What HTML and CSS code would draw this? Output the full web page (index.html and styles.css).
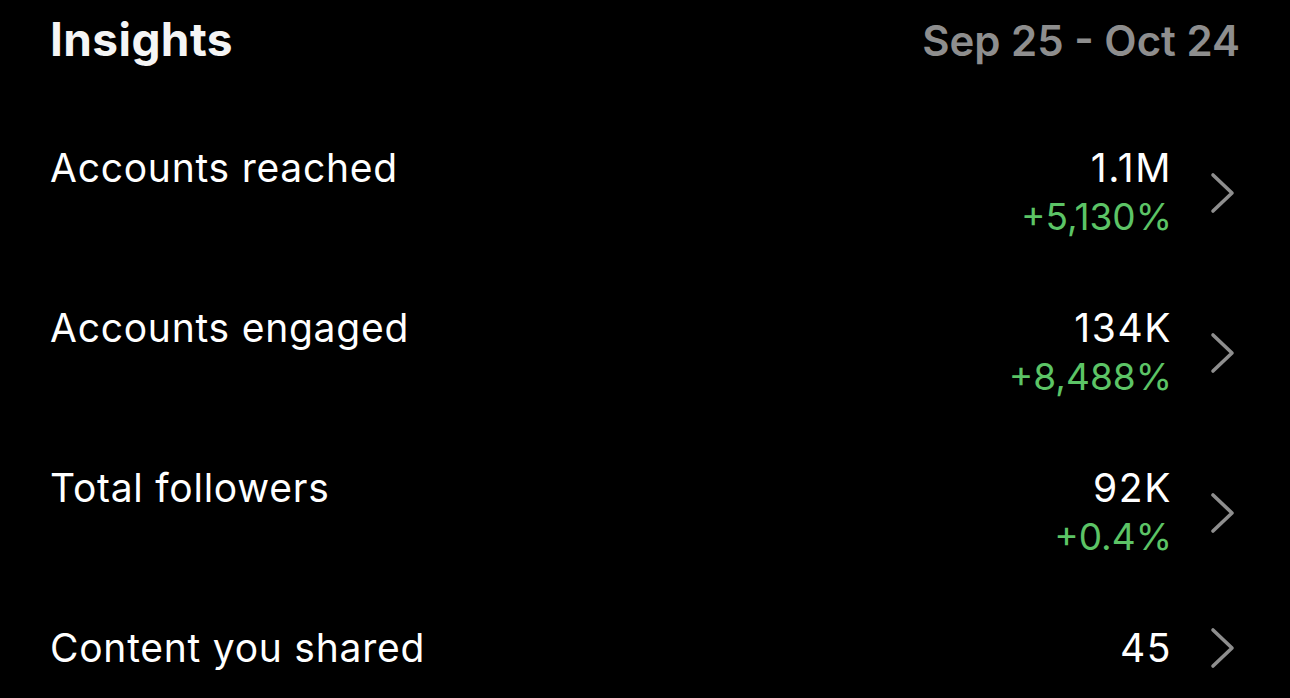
FILE: index.html
```html
<!DOCTYPE html>
<html lang="en">
<head>
  <meta charset="UTF-8" />
  <title>Insights</title>
  <link rel="stylesheet" href="styles.css">
</head>
<body>
  <header class="insights-header">
    <h1>Insights</h1>
    <div class="date-range">Sep 25 - Oct 24</div>
  </header>

  <ul class="metric-list">
    <li class="metric-row">
      <span class="metric-label">Accounts reached</span>
      <div class="metric-right">
        <div class="metric-values">
          <span class="metric-value">1.1M</span>
          <span class="metric-change">+5,130%</span>
        </div>
        <svg class="chevron" viewBox="0 0 26 42"><path d="M3 3 L22 21 L3 39" /></svg>
      </div>
    </li>
    <li class="metric-row">
      <span class="metric-label">Accounts engaged</span>
      <div class="metric-right">
        <div class="metric-values">
          <span class="metric-value">134K</span>
          <span class="metric-change">+8,488%</span>
        </div>
        <svg class="chevron" viewBox="0 0 26 42"><path d="M3 3 L22 21 L3 39" /></svg>
      </div>
    </li>
    <li class="metric-row">
      <span class="metric-label">Total followers</span>
      <div class="metric-right">
        <div class="metric-values">
          <span class="metric-value">92K</span>
          <span class="metric-change">+0.4%</span>
        </div>
        <svg class="chevron" viewBox="0 0 26 42"><path d="M3 3 L22 21 L3 39" /></svg>
      </div>
    </li>
    <li class="metric-row">
      <span class="metric-label">Content you shared</span>
      <div class="metric-right">
        <div class="metric-values">
          <span class="metric-value">45</span>
        </div>
        <svg class="chevron" viewBox="0 0 26 42"><path d="M3 3 L22 21 L3 39" /></svg>
      </div>
    </li>
  </ul>
</body>
</html>
```

FILE: styles.css
```css
body {
  margin: 0;
  background-color: #000;
  color: #fff;
  font-family: Inter, "Noto Sans", sans-serif;
  height: 698px;
  overflow: hidden;
}
.insights-header {
  display: flex;
  justify-content: space-between;
  align-items: baseline;
  padding: 12px 50px 0 50px;
  height: 78px;
}
.insights-header h1 {
  margin: 0;
  font-size: 46px;
  font-weight: 700;
  line-height: 54px;
  letter-spacing: 0.4px;
  color: #f5f5f5;
}
.date-range {
  font-size: 42px;
  font-weight: 600;
  color: #8e8e8e;
}
.metric-list {
  list-style: none;
  margin: 0;
  padding: 55px 0 0 0;
}
.metric-row {
  display: flex;
  justify-content: space-between;
  align-items: flex-start;
  height: 160px;
  padding: 0 54px 0 50px;
}
.metric-row:last-child {
  height: auto;
}
.metric-label {
  font-size: 39px;
  line-height: 46px;
  letter-spacing: 0.75px;
}
.metric-right {
  display: flex;
  align-items: center;
  gap: 38px;
}
.metric-values {
  display: flex;
  flex-direction: column;
  align-items: flex-end;
}
.metric-value {
  font-size: 39px;
  line-height: 46px;
  letter-spacing: 1.6px;
}
.metric-change {
  margin-top: 3px;
  font-size: 37px;
  line-height: 46px;
  color: #5cc466;
}
.chevron {
  width: 26px;
  height: 42px;
  fill: none;
  stroke: #8e8e8e;
  stroke-width: 3.6;
  stroke-linecap: round;
  stroke-linejoin: round;
}
```
